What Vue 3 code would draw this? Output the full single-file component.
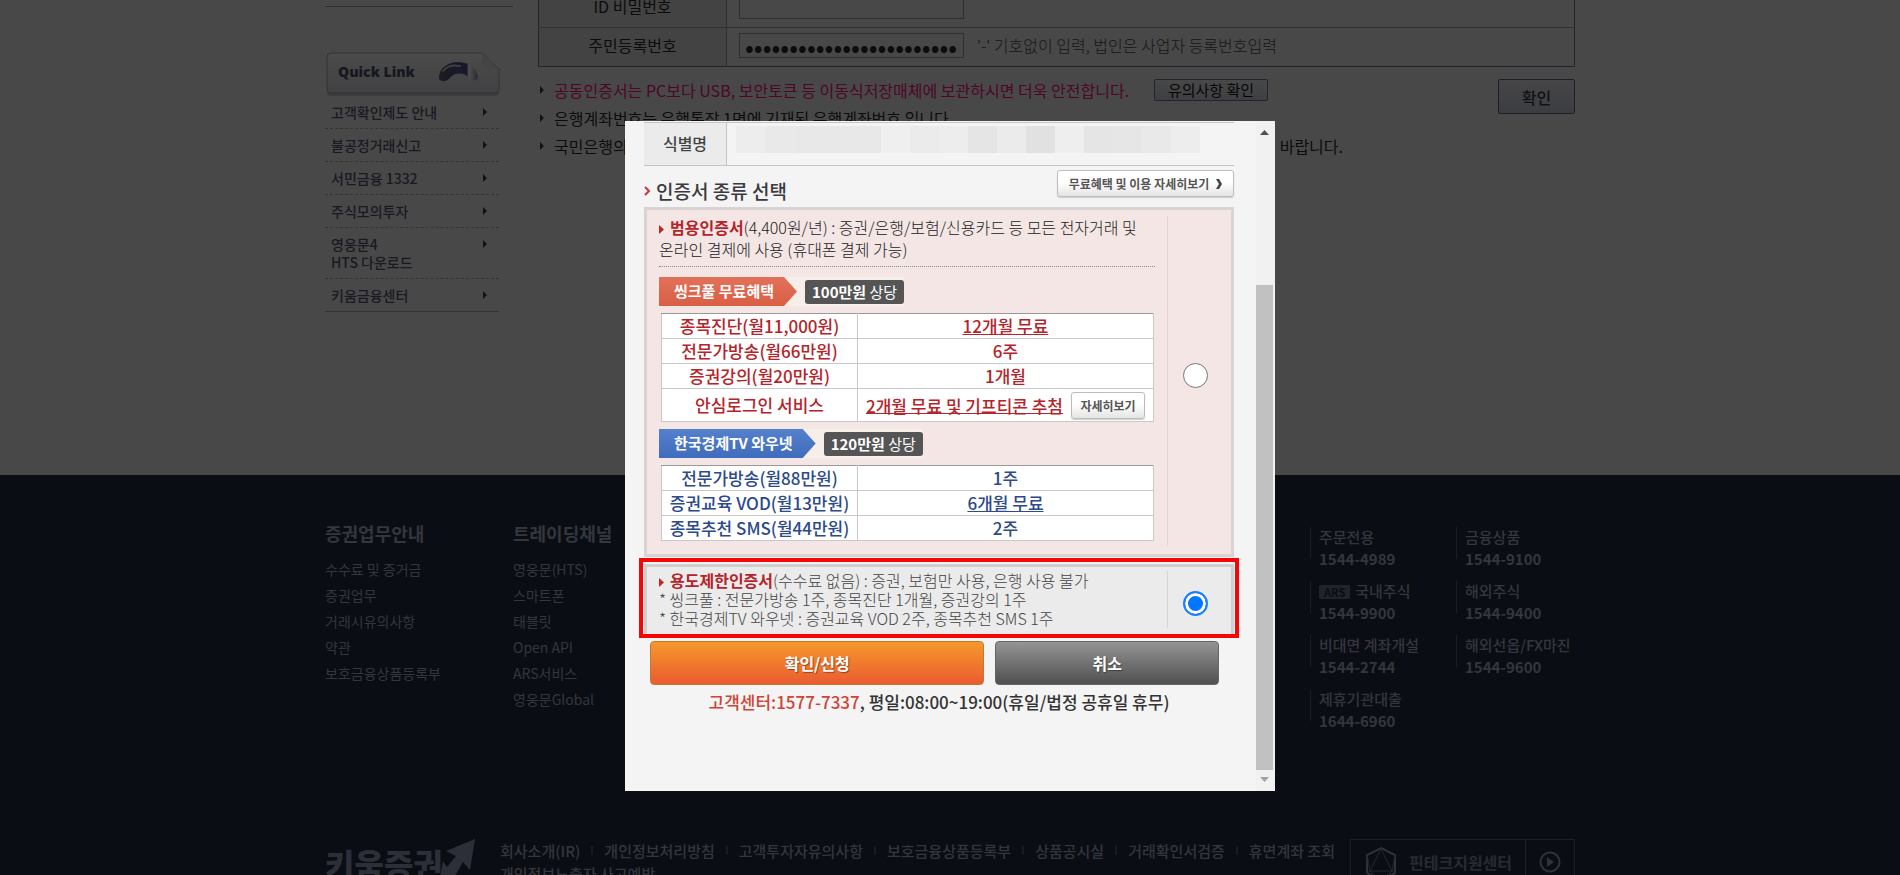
<template>
  <div class="page">
    <main class="wrap main">
      <aside class="side">
        <div class="quick">
          <svg class="quick-bg" viewBox="0 0 174 46" aria-hidden="true">
            <defs>
              <linearGradient id="qbox" x1="0" y1="0" x2="0" y2="1">
                <stop offset="0" stop-color="#4b4b4b" />
                <stop offset="1" stop-color="#414143" />
              </linearGradient>
              <linearGradient id="qarc" x1="0" y1="0" x2="1" y2="0">
                <stop offset="0" stop-color="#1c1c20" />
                <stop offset="0.5" stop-color="#17182a" />
                <stop offset="0.72" stop-color="#191a2c" />
                <stop offset="0.76" stop-color="#505052" />
                <stop offset="1" stop-color="#2a2a2c" />
              </linearGradient>
            </defs>
            <path d="M5 3H157L173 18V40Q173 44 169 44H5Q1 44 1 40V7Q1 3 5 3Z" fill="#3b3b3b" />
            <path d="M5 1H156L173 17V37Q173 41 169 41H5Q1 41 1 37V5Q1 1 5 1Z" fill="url(#qbox)" stroke="#323236" />
            <path d="M156 1V13Q157 17 173 17Z" fill="#444446" />
            <path d="M113 26C113 15 123 10 132 10C145 10 152 19 152 25C152 29 146 30 143 26C138 20 128 20 123 27C120 30 113 30 113 26Z" fill="url(#qarc)" />
            <path d="M117 19C121 14 128 13 134 14" fill="none" stroke="#3e3e44" stroke-width="2" stroke-linecap="round" />
          </svg>
          <strong>Quick Link</strong>
        </div>
        <ul class="quick-list">
          <li v-for="item in quickLinks" :key="item[0]">
            <a href="#"><span><template v-for="(line, i) in item" :key="line"><br v-if="i" />{{ line }}</template></span><i class="tri"></i></a>
          </li>
        </ul>
      </aside>

      <section class="content">
        <table class="form">
          <tbody>
            <tr>
              <th scope="row"><label for="idpw">ID 비밀번호</label></th>
              <td><input id="idpw" type="password" /></td>
            </tr>
            <tr>
              <th scope="row"><label for="regno">주민등록번호</label></th>
              <td><input id="regno" v-model="regNo" type="password" /><span class="hint">'-' 기호없이 입력, 법인은 사업자 등록번호입력</span></td>
            </tr>
          </tbody>
        </table>
        <div class="notice-row">
          <ul class="notices">
            <li class="pink"><i class="tri"></i><span>공동인증서는 PC보다 USB, 보안토큰 등 이동식저장매체에 보관하시면 더욱 안전합니다.</span><button type="button" class="note-btn">유의사항 확인</button></li>
            <li><i class="tri"></i><span>은행계좌번호는 은행통장 1면에 기재된 은행계좌번호 입니다.</span></li>
            <li><i class="tri"></i><span>국민은행의</span><span class="tail">바랍니다.</span></li>
          </ul>
          <button type="button" class="ok-btn">확인</button>
        </div>
      </section>
    </main>

    <footer class="footer">
      <div class="wrap foot-top">
        <nav v-for="col in footCols" :key="col.title" class="foot-col">
          <h4>{{ col.title }}</h4>
          <a v-for="l in col.links" :key="l" href="#">{{ l }}</a>
        </nav>
        <div class="contacts">
          <div v-for="c in contacts" :key="c.name" class="contact">
            <span><em v-if="c.ars">ARS</em>{{ c.name }}</span>
            <strong>{{ c.tel }}</strong>
          </div>
        </div>
      </div>
      <div class="wrap foot-bottom">
        <div class="logo">
          <strong>키움증권</strong>
          <svg viewBox="0 0 36 44" aria-hidden="true"><path d="M36 0L31 31L24 23L12 44H0L4 22L8 28L17 17L7 12Z" fill="#2c2e38" /></svg>
        </div>
        <ul class="policy">
          <li v-for="p in policies" :key="p"><a href="#">{{ p }}</a></li>
        </ul>
        <a href="#" class="fintech">
          <svg class="gem" viewBox="0 0 32 36" aria-hidden="true">
            <path d="M16 2L30 9V27L16 34L2 27V9Z" fill="none" stroke="#30323b" stroke-width="2" />
            <path d="M16 3L5 25H27ZM2 9L5 25L16 34L27 25L30 9M5 25L2 27M27 25L30 27" fill="none" stroke="#262831" />
          </svg>
          <span class="fin-name">핀테크지원센터</span>
          <span class="fin-go">
            <svg viewBox="0 0 22 22" aria-hidden="true"><circle cx="11" cy="11" r="9.5" fill="none" stroke="#30323b" stroke-width="2" /><path d="M8 6L15 11L8 16Z" fill="#30323b" /></svg>
          </span>
        </a>
      </div>
    </footer>

    <div class="overlay">
      <div class="modal" role="dialog" aria-modal="true" aria-labelledby="cert-title">
        <div class="body">
          <div class="ident">
            <span class="ident-name">식별명</span>
            <span class="mosaic"><i v-for="(m, i) in mosaic" :key="i" :style="{ background: m }"></i></span>
          </div>

          <div class="title-row">
            <h3 id="cert-title">
              <svg viewBox="0 0 7 10" aria-hidden="true"><path d="M1 1L5 5L1 9" fill="none" stroke="#c9343c" stroke-width="2" /></svg>인증서 종류 선택
            </h3>
            <button type="button" class="soft benefit">무료혜택 및 이용 자세히보기<svg viewBox="0 0 6 10" aria-hidden="true"><path d="M0 0H3L6 5L3 10H0L3 5Z" fill="#444" /></svg></button>
          </div>

          <div class="box general">
            <div class="box-main">
              <p class="desc"><i class="mark"></i><label for="cert-general">범용인증서</label>(4,400원/년) : 증권/은행/보험/신용카드 등 모든 전자거래 및 온라인 결제에 사용 (휴대폰 결제 가능)</p>
              <template v-for="g in groups" :key="g.name">
                <div class="tag-row" :class="g.color">
                  <strong class="tag">{{ g.name }}</strong>
                  <span class="badge"><b>{{ g.worth }}</b> 상당</span>
                </div>
                <table class="gifts" :class="g.color">
                  <tbody>
                    <tr v-for="r in g.rows" :key="r.name">
                      <td class="gift-name">{{ r.name }}</td>
                      <td :class="{ tall: r.more }">
                        <a v-if="r.link" href="#">{{ r.value }}</a><template v-else>{{ r.value }}</template>
                        <button v-if="r.more" type="button" class="soft more">자세히보기</button>
                      </td>
                    </tr>
                  </tbody>
                </table>
              </template>
            </div>
            <div class="pick"><input id="cert-general" v-model="cert" type="radio" name="cert" value="general" /></div>
          </div>

          <div class="focus">
            <div class="box limited">
              <div class="box-main">
                <p><i class="mark"></i><label for="cert-limited">용도제한인증서</label>(수수료 없음) : 증권, 보험만 사용, 은행 사용 불가</p>
                <p>* 씽크풀 : 전문가방송 1주, 종목진단 1개월, 증권강의 1주</p>
                <p>* 한국경제TV 와우넷 : 증권교육 VOD 2주, 종목추천 SMS 1주</p>
              </div>
              <div class="pick"><input id="cert-limited" v-model="cert" type="radio" name="cert" value="limited" /></div>
            </div>
          </div>

          <div class="actions">
            <button type="button" class="apply">확인/신청</button>
            <button type="button" class="cancel">취소</button>
          </div>
          <p class="call"><span>고객센터:1577-7337</span>, 평일:08:00~19:00(휴일/법정 공휴일 휴무)</p>
        </div>

        <div class="bar" aria-hidden="true">
          <i class="up"></i>
          <i class="gap"></i>
          <i class="thumb"></i>
          <i class="down"></i>
        </div>
      </div>
    </div>
  </div>
</template>

<script setup>
import { ref } from 'vue'

const cert = ref('limited')
const regNo = ref('0'.repeat(24))

const quickLinks = [
  ['고객확인제도 안내'],
  ['불공정거래신고'],
  ['서민금융 1332'],
  ['주식모의투자'],
  ['영웅문4', 'HTS 다운로드'],
  ['키움금융센터']
]

const mosaic = [
  '#ededed', '#e9e9e9', '#e8e8e8', '#e8e8e8', '#e8e8e8', '#efefef', '#ebebeb', '#ededed',
  '#e5e5e5', '#ebebeb', '#e1e1e1', '#eeeeee', '#e5e5e5', '#e6e6e6', '#e9e9e9', '#ededed'
]

const groups = [
  {
    name: '씽크풀 무료혜택',
    worth: '100만원',
    color: 'red',
    rows: [
      { name: '종목진단(월11,000원)', value: '12개월 무료', link: true },
      { name: '전문가방송(월66만원)', value: '6주' },
      { name: '증권강의(월20만원)', value: '1개월' },
      { name: '안심로그인 서비스', value: '2개월 무료 및 기프티콘 추첨', link: true, more: true }
    ]
  },
  {
    name: '한국경제TV 와우넷',
    worth: '120만원',
    color: 'blue',
    rows: [
      { name: '전문가방송(월88만원)', value: '1주' },
      { name: '증권교육 VOD(월13만원)', value: '6개월 무료', link: true },
      { name: '종목추천 SMS(월44만원)', value: '2주' }
    ]
  }
]

const footCols = [
  { title: '증권업무안내', links: ['수수료 및 증거금', '증권업무', '거래시유의사항', '약관', '보호금융상품등록부'] },
  { title: '트레이딩채널', links: ['영웅문(HTS)', '스마트폰', '태블릿', 'Open API', 'ARS서비스', '영웅문Global'] }
]

const contacts = [
  { name: '주문전용', tel: '1544-4989' },
  { name: '금융상품', tel: '1544-9100' },
  { name: '국내주식', tel: '1544-9900', ars: true },
  { name: '해외주식', tel: '1544-9400' },
  { name: '비대면 계좌개설', tel: '1544-2744' },
  { name: '해외선옵/FX마진', tel: '1544-9600' },
  { name: '제휴기관대출', tel: '1644-6960' }
]

const policies = [
  '회사소개(IR)', '개인정보처리방침', '고객투자자유의사항', '보호금융상품등록부',
  '상품공시실', '거래확인서검증', '휴면계좌 조회', '개인정보노출자 사고예방'
]
</script>

<style>
body {
  background: #484848;
}
</style>

<style scoped>
* {
  box-sizing: border-box;
}
.page {
  height: 100vh;
  overflow: hidden;
  display: flex;
  flex-direction: column;
  font-family: "Noto Sans CJK KR", sans-serif;
  font-size: 16px;
  color: #0c0c0c;
  background: #484848;
}
ul, p, h3, h4 {
  margin: 0;
  padding: 0;
  list-style: none;
}
a {
  color: inherit;
  text-decoration: none;
}
i, em {
  font-style: normal;
}
button, input {
  font-family: inherit;
  margin: 0;
  padding: 0;
}
.wrap {
  width: 100%;
  max-width: 1250px;
  margin: 0 auto;
}
.main {
  display: flex;
  gap: 25px;
  flex: none;
  padding-bottom: 163px;
}

/* sidebar */
.side {
  width: 188px;
  padding-top: 6px;
}
.side::before {
  content: "";
  display: block;
  border-top: 1px solid #2c2c33;
  margin-bottom: 45px;
}
.quick {
  position: relative;
  height: 44px;
  margin-left: 1px;
  padding: 8px 12px;
  font: bold 14px/24px "Noto Sans", sans-serif;
  color: #16171f;
}
.quick-bg {
  position: absolute;
  left: 0;
  top: 0;
  width: 174px;
  height: 46px;
}
.quick strong {
  position: relative;
}
.quick-list {
  width: 174px;
}
.quick-list li {
  border-bottom: 1px dashed #343434;
}
.quick-list li:last-child {
  border-bottom: 1px solid #333338;
}
.quick-list a {
  display: flex;
  justify-content: space-between;
  padding: 7px 12px 7px 6px;
  font-size: 14px;
  line-height: 18px;
  font-weight: 500;
  color: #181922;
}
.tri {
  flex: none;
  width: 4px;
  height: 8px;
  background: #10111c;
  clip-path: polygon(0 0, 100% 50%, 0 100%);
}
.quick-list .tri {
  margin-top: 5px;
}

/* form */
.content {
  flex: 1;
}
.form {
  width: 100%;
  margin-top: -12px;
  border-collapse: collapse;
  border: 1px solid #23232b;
}
.form th, .form td {
  height: 39px;
  padding: 0 0 4px;
  border-bottom: 1px solid #303036;
}
.form tr:last-child > * {
  border-bottom-color: #23232b;
}
.form th {
  width: 188px;
  font-weight: 400;
  background: #434343;
  border-right: 1px solid #303036;
}
.form td {
  padding: 0 0 6px 12px;
}
.form input {
  width: 225px;
  height: 25px;
  padding: 0 5px;
  border: 1px solid #2f2f2f;
  background: transparent;
  font-size: 26px;
  line-height: 23px;
  color: #0c0c0c;
  vertical-align: middle;
}
.hint {
  margin-left: 13px;
  font-weight: 300;
  color: #161616;
  vertical-align: middle;
}
.notice-row {
  display: flex;
  align-items: flex-start;
  justify-content: space-between;
  padding-top: 9px;
}
.notices {
  width: 805px;
  padding-left: 2px;
}
.notices li {
  display: flex;
  align-items: center;
  height: 28px;
  white-space: nowrap;
}
.notices .tri {
  margin-right: 10px;
}
.pink span {
  color: #4d0628;
}
.tail {
  margin-left: auto;
}
.note-btn {
  height: 22px;
  margin-left: auto;
  margin-right: 75px;
  width: 114px;
  border: 1px solid #22242c;
  border-radius: 2px;
  background: linear-gradient(#484848, #3e3f42);
  font-size: 15px;
  line-height: 18px;
  color: #060606;
}
.ok-btn {
  width: 77px;
  height: 35px;
  margin-top: 3px;
  border: 1px solid #1d1e26;
  border-radius: 2px;
  background: linear-gradient(#464648, #3c3d41);
  font-size: 16px;
  font-weight: 500;
  color: #101015;
}

/* footer */
.footer {
  flex: 1 0 auto;
  background: #0b0d14;
  color: #34363d;
  padding-top: 46px;
}
.foot-top {
  display: flex;
}
.foot-col {
  width: 188px;
  display: flex;
  flex-direction: column;
}
.foot-col h4 {
  margin-bottom: 11px;
  font-size: 18px;
  line-height: 24px;
}
.foot-col a {
  font-size: 14px;
  line-height: 26px;
}
.contacts {
  display: grid;
  grid-template-columns: 146px 119px;
  row-gap: 10px;
  margin-left: auto;
  padding-top: 5px;
}
.contact {
  height: 44px;
  padding-left: 9px;
  background: linear-gradient(#1b1d24, #1b1d24) 0 1px / 1px 32px no-repeat;
  font-size: 15px;
  line-height: 22px;
  white-space: nowrap;
}
.contact span, .contact strong {
  display: block;
}
.contact span {
  font-weight: 500;
}
.contact em {
  display: inline-block;
  margin-right: 5px;
  padding: 0 5px;
  background: #20222c;
  border-radius: 1px;
  color: #0b0d14;
  font-size: 11px;
  line-height: 14px;
  font-weight: bold;
}
.foot-bottom {
  display: flex;
  align-items: flex-start;
  padding-top: 107px;
}
.logo {
  display: flex;
  width: 175px;
  flex: none;
  color: #2c2e38;
}
.logo strong {
  padding-top: 1px;
  font-size: 32px;
  line-height: 46px;
  font-weight: 900;
}
.logo svg {
  width: 36px;
  height: 44px;
  margin-left: -4px;
}
.policy {
  display: flex;
  flex-wrap: wrap;
  flex: 1;
  font-size: 15px;
  line-height: 23px;
  font-weight: 500;
}
.policy li {
  display: flex;
  align-items: center;
}
.policy li:not(:nth-last-child(-n + 2))::after {
  content: "";
  width: 2px;
  height: 9px;
  margin: 0 11px;
  background: #171a22;
}
.fintech {
  display: flex;
  width: 225px;
  height: 46px;
  border: 1px solid #1d1f27;
  color: #282a33;
  font-weight: bold;
  line-height: 44px;
}
.gem {
  width: 32px;
  height: 36px;
  margin: 6px 12px 0 14px;
}
.fin-name {
  flex: 1;
  font-size: 16px;
}
.fin-go {
  width: 49px;
  padding: 11px 0 0 13px;
  border-left: 1px solid #1d1f27;
  line-height: 0;
}
.fin-go svg {
  width: 22px;
  height: 22px;
}

/* modal */
.overlay {
  position: fixed;
  inset: 0;
  display: flex;
  align-items: flex-start;
  justify-content: center;
  padding-top: 121px;
}
.modal {
  display: flex;
  width: 650px;
  max-width: 100%;
  background: #f4f4f4;
  color: #444;
}
.body {
  flex: 1;
  padding: 1px 22px 78px 19px;
}
.ident {
  display: flex;
  height: 44px;
  border-top: 1px solid #c4c4c4;
  border-bottom: 1px solid #c4c4c4;
}
.ident-name {
  width: 83px;
  border-right: 1px solid #c4c4c4;
  background: #ebebeb;
  font-weight: 500;
  line-height: 40px;
  text-align: center;
}
.mosaic {
  display: flex;
  flex: 1;
  height: 27px;
  margin: 3px 34px 0 9px;
}
.mosaic i {
  flex: 1;
}
.title-row {
  display: flex;
  justify-content: space-between;
  align-items: flex-start;
  height: 41px;
  padding: 4px 0 0;
}
h3 {
  display: flex;
  align-items: center;
  padding-top: 8px;
  font-size: 19px;
  line-height: 26px;
  font-weight: 500;
  color: #3c3a40;
}
h3 svg {
  width: 7px;
  height: 10px;
  margin-right: 5px;
}
.soft {
  border: 1px solid #bdbdbd;
  border-radius: 3px;
  background: linear-gradient(#fff 45%, #e4e4e4);
  box-shadow: 0 1px 1px #ccc;
  font-size: 12px;
  font-weight: bold;
  color: #555;
}
.benefit {
  display: flex;
  align-items: center;
  justify-content: center;
  gap: 7px;
  width: 177px;
  height: 27px;
}
.benefit svg {
  width: 6px;
  height: 10px;
}
.box {
  display: flex;
  border: 3px solid #d9d3d3;
}
.general {
  height: 350px;
  padding: 6px 0 8px;
  background: #f4e6e5;
}
.box-main {
  flex: 1;
  padding: 0 12px;
}
.pick {
  display: flex;
  align-items: center;
  justify-content: center;
  width: 64px;
  padding-right: 8px;
  border-left: 1px solid #e0d4d4;
}
.general .pick {
  padding-bottom: 12px;
}
.pick input {
  appearance: none;
  width: 25px;
  height: 25px;
  border: 1px solid #767676;
  border-radius: 50%;
  background: #fff;
}
.pick input:checked {
  border: 2px solid #1a80ff;
  background: #0075ff;
  box-shadow: inset 0 0 0 3px #fff;
}
.mark {
  display: inline-block;
  width: 5px;
  height: 9px;
  margin-right: 6px;
  background: #c0281c;
  clip-path: polygon(0 0, 100% 50%, 0 100%);
}
.box label {
  font-weight: bold;
  color: #b4242c;
}
.desc {
  padding-bottom: 6px;
  margin-bottom: 10px;
  border-bottom: 1px dotted #888;
  font-weight: 300;
  line-height: 22px;
  word-break: keep-all;
  color: #222;
}
.tag-row {
  display: flex;
  align-items: center;
  gap: 8px;
  width: max-content;
  height: 29px;
  background: #f7eeea;
  font-size: 15px;
}
.tag {
  height: 29px;
  padding: 0 23px 0 15px;
  line-height: 28px;
  color: #fff;
  clip-path: polygon(0 0, calc(100% - 13px) 0, 100% 50%, calc(100% - 13px) 100%, 0 100%);
}
.red .tag {
  background: linear-gradient(#e2715a, #d95f44);
}
.blue .tag {
  background: linear-gradient(#5580cc, #3f6cbc);
}
.badge {
  padding: 0 7px;
  border-radius: 3px;
  background: #555;
  line-height: 24px;
  color: #fff;
}
.gifts {
  width: calc(100% - 3px);
  margin: 7px 1px 7px 2px;
  border-collapse: collapse;
  background: #fff;
  font-size: 17px;
  font-weight: 500;
  text-align: center;
}
.gifts td {
  height: 25px;
  padding: 0;
  border: 1px solid #c9c9c9;
  line-height: 22px;
  white-space: nowrap;
}
.gifts tr:first-child td {
  border-top-color: #999;
}
.gifts .gift-name {
  width: 196px;
}
.gifts .tall {
  height: 33px;
}
.gifts a {
  text-decoration: underline;
}
.gifts .tall a {
  vertical-align: middle;
}
.gifts.red {
  color: #b5242a;
}
.gifts.blue {
  color: #2c4a8c;
}
.more {
  width: 74px;
  height: 27px;
  margin-left: 8px;
  vertical-align: middle;
}
.focus {
  margin: 1px -5px 0;
  padding: 2px 1px 0;
  border: 4px solid #f50505;
}
.limited {
  height: 70px;
  padding: 4px 0 6px;
  background: #ebebeb;
  border-color: #cfcfcf;
  border-bottom-width: 0;
  font-weight: 300;
  line-height: 19px;
  color: #444;
}
.limited .pick {
  padding-top: 8px;
  border-color: #d6d6d6;
}
.limited .box-main {
  white-space: nowrap;
}
.actions {
  display: flex;
  gap: 11px;
  padding: 3px 15px 0 6px;
}
.actions button {
  height: 44px;
  border-radius: 4px;
  font-size: 16px;
  font-weight: bold;
  color: #fff;
  text-shadow: 1px 1px 1px #0006;
}
.apply {
  flex: 3;
  border: 1px solid #c07a30;
  background: linear-gradient(#f6982c, #ea5c30);
}
.cancel {
  flex: 2;
  border: 1px solid #666;
  background: linear-gradient(#949494, #505050);
}
.call {
  padding-top: 6px;
  font-size: 17px;
  line-height: 22px;
  font-weight: 500;
  text-align: center;
  color: #333;
}
.call span {
  color: #cf4436;
}

/* scroll bar */
.bar {
  display: flex;
  flex-direction: column;
  align-items: center;
  width: 19px;
  padding: 9px 2px 9px 0;
  background: #f1f1f1;
}
.up, .down {
  width: 9px;
  height: 5px;
  background: #505050;
  clip-path: polygon(50% 0, 100% 100%, 0 100%);
}
.down {
  margin-top: 7px;
  background: #a3a3a3;
  clip-path: polygon(0 0, 100% 0, 50% 100%);
}
.gap {
  flex: 150;
}
.thumb {
  flex: 485;
  width: 17px;
  background: #c1c1c1;
}
</style>
